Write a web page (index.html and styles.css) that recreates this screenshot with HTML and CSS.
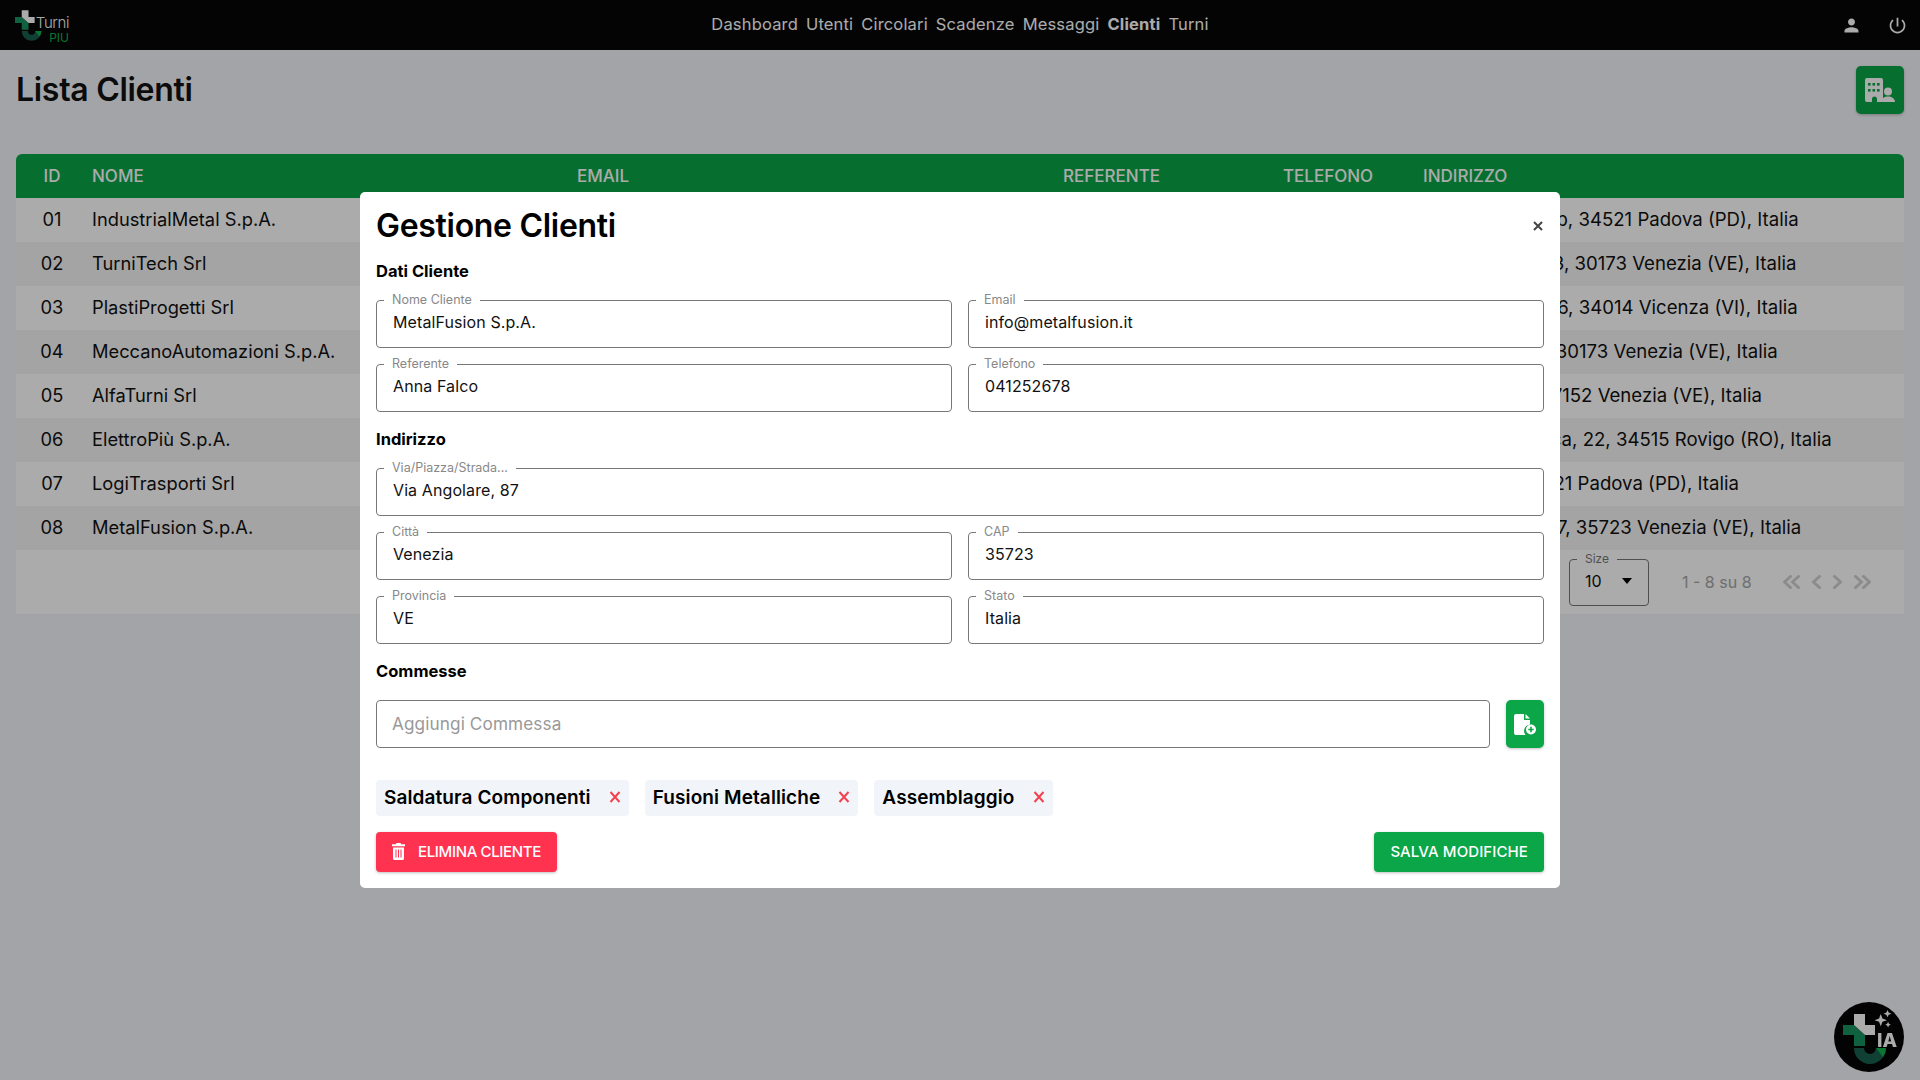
FILE: index.html
```html
<!DOCTYPE html>
<html lang="it">
<head>
  <meta charset="UTF-8">
  <title>Lista Clienti</title>
  <link rel="stylesheet" href="styles.css">
</head>
<body>
  <svg class="defs" width="0" height="0">
    <symbol id="mark" viewBox="9 12 44 50">
      <path d="M25 46a11 11 0 0 0 22 0" fill="none" stroke="#17604c" stroke-width="10"/>
      <path d="M42 46h10a15 15 0 0 1-3 9z" fill="#0fb04c"/>
      <path d="M9 23h11l11 10v11H20V33H9z" fill="#17915f"/>
      <path d="M20 12h11v11h10v10H31L20 23z" fill="#fff"/>
    </symbol>
  </svg>

  <header class="topbar">
    <a class="logo" href="#">
      <svg class="logo-mark"><use href="#mark"/></svg>
      <span class="logo-text"><span class="logo-turni">Turni</span><span class="logo-piu">PIU</span></span>
    </a>
    <nav class="nav">
      <a href="#">Dashboard</a>
      <a href="#">Utenti</a>
      <a href="#">Circolari</a>
      <a href="#">Scadenze</a>
      <a href="#">Messaggi</a>
      <a class="active" href="#">Clienti</a>
      <a href="#">Turni</a>
    </nav>
    <div class="topbar-icons">
      <svg viewBox="0 0 24 24"><path d="M12 12c2.21 0 4-1.79 4-4s-1.79-4-4-4-4 1.79-4 4 1.79 4 4 4zm0 2c-2.67 0-8 1.34-8 4v2h16v-2c0-2.66-5.33-4-8-4z"/></svg>
      <svg viewBox="0 0 24 24"><path d="M13 3h-2v10h2V3zm4.83 2.17l-1.42 1.42C17.99 7.86 19 9.81 19 12c0 3.87-3.13 7-7 7s-7-3.13-7-7c0-2.19 1.01-4.14 2.58-5.42L6.17 5.17C4.23 6.82 3 9.26 3 12c0 4.97 4.03 9 9 9s9-4.03 9-9c0-2.74-1.23-5.18-3.17-6.83z"/></svg>
    </div>
  </header>

  <main class="page">
    <div class="page-head">
      <h1>Lista Clienti</h1>
      <button class="btn-square btn-add-client">
        <svg width="30" height="24" viewBox="0 0 30 24">
          <path d="M2 0h14a2 2 0 0 1 2 2v22h-6v-3a2.500 2.500 0 0 0-5 0v3H2a2 2 0 0 1-2-2V2a2 2 0 0 1 2-2z" fill="#fff"/>
          <g fill="#0aa648">
            <rect x="3" y="5" width="2.600" height="2.600"/><rect x="7.500" y="5" width="2.600" height="2.600"/><rect x="12" y="5" width="2.600" height="2.600"/>
            <rect x="3" y="11" width="2.600" height="2.600"/><rect x="7.500" y="11" width="2.600" height="2.600"/><rect x="12" y="11" width="2.600" height="2.600"/>
          </g>
          <circle cx="23" cy="13.500" r="4" fill="#fff"/>
          <path d="M16 24c0-3.500 3.500-5.500 7-5.500s7 2 7 5.500z" fill="#fff"/>
        </svg>
      </button>
    </div>

    <div class="table-wrap">
      <table class="clients">
        <colgroup>
          <col class="c-id"><col class="c-nome"><col class="c-email"><col class="c-ref"><col class="c-tel"><col>
        </colgroup>
        <thead>
          <tr><th class="id">ID</th><th class="nome">Nome</th><th>Email</th><th>Referente</th><th>Telefono</th><th>Indirizzo</th></tr>
        </thead>
        <tbody>
          <tr><td class="id">01</td><td class="nome">IndustrialMetal S.p.A.</td><td></td><td></td><td></td><td class="addr">Via Romana, 12b, 34521 Padova (PD), Italia</td></tr>
          <tr><td class="id">02</td><td class="nome">TurniTech Srl</td><td></td><td></td><td></td><td class="addr">Via Milanese, 13, 30173 Venezia (VE), Italia</td></tr>
          <tr><td class="id">03</td><td class="nome">PlastiProgetti Srl</td><td></td><td></td><td></td><td class="addr">Via Veronese, 16, 34014 Vicenza (VI), Italia</td></tr>
          <tr><td class="id">04</td><td class="nome">MeccanoAutomazioni S.p.A.</td><td></td><td></td><td></td><td class="addr">Via Trevisiana, 30173 Venezia (VE), Italia</td></tr>
          <tr><td class="id">05</td><td class="nome">AlfaTurni Srl</td><td></td><td></td><td></td><td class="addr">Via Margera, 37152 Venezia (VE), Italia</td></tr>
          <tr><td class="id">06</td><td class="nome">ElettroPiù S.p.A.</td><td></td><td></td><td></td><td class="addr">Via Ar. Vespucca, 22, 34515 Rovigo (RO), Italia</td></tr>
          <tr><td class="id">07</td><td class="nome">LogiTrasporti Srl</td><td></td><td></td><td></td><td class="addr">Via Trento, 35121 Padova (PD), Italia</td></tr>
          <tr><td class="id">08</td><td class="nome">MetalFusion S.p.A.</td><td></td><td></td><td></td><td class="addr">Via Angolare, 87, 35723 Venezia (VE), Italia</td></tr>
        </tbody>
      </table>
      <div class="table-foot">
        <div class="size-select">
          <span class="size-label">Size</span>
          <span class="size-value">10</span>
          <span class="size-caret"></span>
        </div>
        <span class="page-info">1 - 8 su 8</span>
        <div class="pager">
          <svg viewBox="0 0 18 14" width="18" height="14"><path d="M8.500 .5 1.500 7l7 6.500M16.500 .5 9.500 7l7 6.500"/></svg>
          <svg viewBox="0 0 11 14" width="11" height="14"><path d="M9.500 .5 2.500 7l7 6.500"/></svg>
          <svg viewBox="0 0 11 14" width="11" height="14"><path d="m1.500 .5 7 6.500-7 6.500"/></svg>
          <svg viewBox="0 0 18 14" width="18" height="14"><path d="m1.500 .5 7 6.500-7 6.500M9.500 .5l7 6.500-7 6.500"/></svg>
        </div>
      </div>
    </div>
  </main>

  <button class="fab">
    <svg class="fab-mark"><use href="#mark"/></svg>
    <svg class="fab-stars" viewBox="0 0 16 16" width="18" height="18">
      <path d="M6 3.500 7.500 7.500 11.500 9 7.500 10.500 6 14.500 4.500 10.500.5 9 4.500 7.500zM12 0l1 2.300L15.500 3.300l-2.500 1L12 6.500l-1-2.200-2.500-1 2.500-1zM12.500 10.500l.8 1.700 1.700.8-1.700.8-.8 1.700-.8-1.700-1.700-.8 1.700-.8z" fill="#fff"/>
    </svg>
    <span class="fab-text">IA</span>
  </button>

  <div class="backdrop">
    <section class="modal">
      <div class="modal-head">
        <h2>Gestione Clienti</h2>
        <svg class="modal-close" viewBox="0 0 10 10" width="10" height="10"><path d="m1 1 8 8M9 1 1 9"/></svg>
      </div>

      <h3>Dati Cliente</h3>
      <div class="form-grid">
        <div class="field"><label>Nome Cliente</label><div class="field-value">MetalFusion S.p.A.</div></div>
        <div class="field"><label>Email</label><div class="field-value">info@metalfusion.it</div></div>
        <div class="field"><label>Referente</label><div class="field-value">Anna Falco</div></div>
        <div class="field"><label>Telefono</label><div class="field-value">041252678</div></div>
      </div>

      <h3>Indirizzo</h3>
      <div class="form-grid">
        <div class="field wide"><label>Via/Piazza/Strada...</label><div class="field-value">Via Angolare, 87</div></div>
        <div class="field"><label>Città</label><div class="field-value">Venezia</div></div>
        <div class="field"><label>CAP</label><div class="field-value">35723</div></div>
        <div class="field"><label>Provincia</label><div class="field-value">VE</div></div>
        <div class="field"><label>Stato</label><div class="field-value">Italia</div></div>
      </div>

      <h3>Commesse</h3>
      <div class="add-row">
        <div class="field grow"><div class="field-value placeholder">Aggiungi Commessa</div></div>
        <button class="btn-square btn-add-job">
          <svg width="23" height="21" viewBox="0 0 23 21">
            <path d="M2 0h8v6h6v4.500a6.500 6.500 0 0 0-4.500 10.500H2a2 2 0 0 1-2-2V2a2 2 0 0 1 2-2z" fill="#fff"/>
            <path d="M11.500 0 16 4.600h-4.500z" fill="#fff"/>
            <circle cx="17" cy="15.500" r="5" fill="#fff"/>
            <path d="M17 12.800v5.400M14.300 15.500h5.400" stroke="#0aa648" stroke-width="1.600"/>
          </svg>
        </button>
      </div>

      <div class="chips">
        <span class="chip">Saldatura Componenti<svg viewBox="0 0 12 12"><path d="m1.500 1 9 10M10.500 1l-9 10"/></svg></span>
        <span class="chip">Fusioni Metalliche<svg viewBox="0 0 12 12"><path d="m1.500 1 9 10M10.500 1l-9 10"/></svg></span>
        <span class="chip">Assemblaggio<svg viewBox="0 0 12 12"><path d="m1.500 1 9 10M10.500 1l-9 10"/></svg></span>
      </div>

      <div class="modal-actions">
        <button class="btn btn-danger">
          <svg width="13" height="17" viewBox="0 0 13 17">
            <path d="M4.500 0h4l.7 1.300H13v1.900H0V1.300h3.800zM1 4.500h11V15.500a1.500 1.500 0 0 1-1.500 1.500h-8A1.500 1.500 0 0 1 1 15.500z" fill="#fff"/>
            <path d="M4 6.500v8M6.500 6.500v8M9 6.500v8" stroke="#ff3350" stroke-width="1"/>
          </svg>
          Elimina Cliente
        </button>
        <button class="btn btn-save">Salva Modifiche</button>
      </div>
    </section>
  </div>
</body>
</html>
```

FILE: styles.css
```css
*{
  box-sizing: border-box;
}
html,body{
  height: 100%;
}
body{
  margin: 0;
  height: 1080px;
  overflow: hidden;
  background: #f4f5f9;
  color: #111;
  font-family: "Inter", "Liberation Sans", sans-serif;
  font-size: 16px;
}
a{
  color: inherit;
  text-decoration: none;
}
button{
  border: 0;
  font-family: inherit;
  cursor: pointer;
}
.defs{
  position: absolute;
}

/* top bar */
.topbar{
  display: grid;
  grid-template-columns: 1fr auto 1fr;
  align-items: center;
  height: 50px;
  background: #070707;
  color: #fff;
}
.logo{
  display: flex;
  align-items: flex-start;
  padding: 10px 0 0 15px;
  height: 50px;
}
.logo-mark{
  width: 27px;
  height: 31px;
}
.logo-text{
  display: flex;
  flex-direction: column;
  align-items: flex-end;
  margin: 4px 0 0 -4px;
  width: 31px;
}
.logo-turni{
  font-size: 15px;
  font-weight: 300;
  line-height: 18px;
  letter-spacing: -.4px;
}
.logo-piu{
  font-size: 12px;
  font-weight: 400;
  line-height: 11px;
  color: #0fb04c;
}
.nav{
  display: flex;
  gap: 8px;
  margin-bottom: 2px;
  font-size: 16.500px;
  letter-spacing: .17px;
}
.nav a.active{
  font-weight: 700;
}
.topbar-icons{
  display: flex;
  justify-content: flex-end;
  gap: 25px;
  padding-right: 12px;
}
.topbar-icons svg{
  width: 21px;
  height: 21px;
  fill: #fff;
}

/* page */
.page{
  padding: 16px 16px 0;
}
.page-head{
  display: flex;
  justify-content: space-between;
  align-items: center;
  height: 48px;
}
.page-head h1{
  margin: 0 0 2px;
  font-size: 32px;
  font-weight: 600;
  letter-spacing: -.3px;
}
.btn-square{
  display: flex;
  align-items: center;
  justify-content: center;
  padding: 0;
  background: #0aa648;
  border-radius: 5px;
  box-shadow: 0 1px 3px rgba(0,0,0,.25);
}
.btn-add-client{
  width: 48px;
  height: 48px;
}
.table-wrap{
  margin-top: 40px;
  border-radius: 6px 6px 0 0;
  overflow: hidden;
}
.clients{
  width: 100%;
  border-collapse: collapse;
  table-layout: fixed;
  font-size: 18.300px;
}
.c-id{ width: 72px; }
.c-nome{ width: 489px; }
.c-email{ width: 486px; }
.c-ref{ width: 220px; }
.c-tel{ width: 140px; }
.clients th{
  height: 44px;
  padding: 0;
  background: #0aa648;
  color: #fff;
  font-weight: 500;
  font-size: 17px;
  text-align: left;
  text-transform: uppercase;
  white-space: nowrap;
}
.clients td{
  height: 44px;
  padding: 0 0 2px;
  white-space: nowrap;
}
.clients tbody tr:nth-child(odd){
  background: #fff;
}
.clients tbody tr:nth-child(even){
  background: #f5f5f5;
}
.clients .id{
  text-align: center;
}
.clients .nome{
  padding-left: 4px;
}
.clients .addr{
  font-size: 18.600px;
}
.table-foot{
  display: flex;
  align-items: center;
  height: 64px;
  padding-left: 1553px;
  background: #fff;
}
.size-select{
  position: relative;
  width: 80px;
  height: 47px;
  border: 1px solid #777;
  border-radius: 4px;
}
.size-label{
  position: absolute;
  top: -8px;
  left: 7px;
  padding: 0 8px;
  background: #fff;
  color: #777;
  font-size: 12px;
  line-height: 14px;
}
.size-value{
  position: absolute;
  left: 15px;
  top: 11px;
  line-height: 20px;
}
.size-caret{
  position: absolute;
  left: 52px;
  top: 18px;
  border: 5px solid transparent;
  border-top: 6px solid #000;
  border-bottom: 0;
}
.page-info{
  margin-left: 33px;
  color: #a5a5a5;
}
.pager{
  display: flex;
  align-items: center;
  gap: 10px;
  margin-left: 31px;
}
.pager svg{
  fill: none;
  stroke: #cfcfcf;
  stroke-width: 2.800;
}

/* assistant button */
.fab{
  position: fixed;
  right: 16px;
  bottom: 8px;
  width: 70px;
  height: 70px;
  padding: 0;
  border-radius: 50%;
  background: #050505;
}
.fab-mark{
  position: absolute;
  left: 9px;
  top: 12px;
  width: 44px;
  height: 50px;
}
.fab-stars{
  position: absolute;
  left: 40px;
  top: 8px;
}
.fab-text{
  position: absolute;
  left: 43px;
  top: 28px;
  color: #fff;
  font-size: 19px;
  font-weight: 800;
  line-height: 22px;
}

/* modal */
.backdrop{
  position: fixed;
  inset: 0;
  display: flex;
  align-items: center;
  justify-content: center;
  background: rgba(0,0,0,.33);
}
.modal{
  width: 1200px;
  height: 696px;
  padding: 16px;
  background: #fff;
  border-radius: 5px;
}
.modal-head{
  display: flex;
  justify-content: space-between;
  align-items: center;
  height: 36px;
}
.modal-head h2{
  margin: 0 0 2px;
  font-size: 32px;
  font-weight: 600;
  letter-spacing: -.3px;
  color: #000;
}
.modal-close{
  margin-right: 1px;
  fill: none;
  stroke: #444;
  stroke-width: 2;
}
.modal h3{
  margin: 15px 0 17px;
  font-size: 16.500px;
  font-weight: 700;
  line-height: 24px;
  color: #000;
}
.form-grid{
  display: grid;
  grid-template-columns: 1fr 1fr;
  gap: 16px;
}
.field{
  position: relative;
  height: 48px;
  border: 1px solid #777;
  border-radius: 4px;
}
.field.wide{
  grid-column: 1 / 3;
}
.field.grow{
  flex: 1;
}
.field label{
  position: absolute;
  top: -8px;
  left: 7px;
  padding: 0 8px;
  background: #fff;
  color: #888;
  font-size: 12.500px;
  line-height: 14px;
}
.field-value{
  padding: 10px 16px 0;
  line-height: 22px;
  letter-spacing: .1px;
  color: #111;
}
.field-value.placeholder{
  padding: 12px 15px 0;
  font-size: 17.200px;
  color: #999;
}
.add-row{
  display: flex;
  gap: 16px;
}
.btn-add-job{
  width: 38px;
  height: 48px;
}
.chips{
  display: flex;
  gap: 16px;
  margin-top: 32px;
}
.chip{
  display: flex;
  align-items: center;
  gap: 18px;
  height: 36px;
  padding: 0 8px 2px;
  background: #f1f4f9;
  border-radius: 4px;
  color: #000;
  font-size: 19px;
  font-weight: 600;
  letter-spacing: .1px;
}
.chip svg{
  width: 12px;
  height: 12px;
  fill: none;
  stroke: #f5414f;
  stroke-width: 2;
}
.modal-actions{
  display: flex;
  justify-content: space-between;
  margin-top: 16px;
}
.btn{
  display: flex;
  align-items: center;
  gap: 13px;
  height: 40px;
  padding: 0 16px 2px;
  border-radius: 4px;
  color: #fff;
  font-size: 15px;
  font-weight: 500;
  text-transform: uppercase;
  box-shadow: 0 1px 3px rgba(0,0,0,.25);
}
.btn-danger{
  background: #ff3350;
  letter-spacing: -.35px;
}
.btn-save{
  background: #0aa648;
  letter-spacing: .1px;
}
```
